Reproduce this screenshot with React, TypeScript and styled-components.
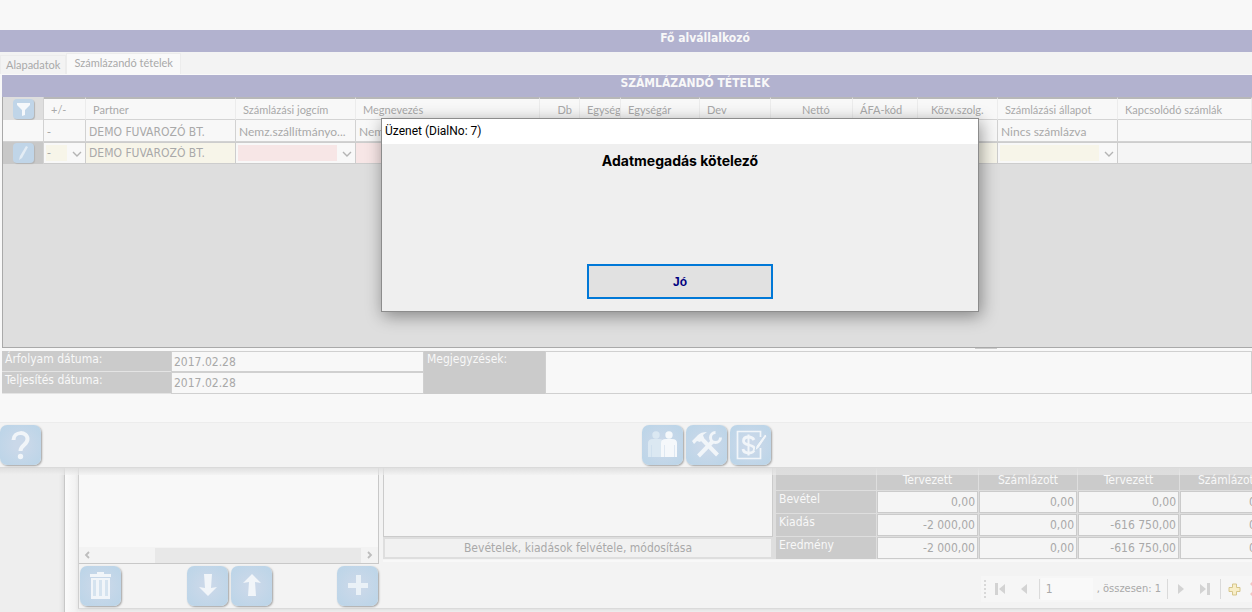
import React from "react";
import styled, { createGlobalStyle, css } from "styled-components";

const Global = createGlobalStyle`
  * { box-sizing: border-box; }
  body {
    margin: 0;
    background: #f8f8f8;
    color: #a9a9a9;
    font: 12px/16px "DejaVu Sans Condensed", "DejaVu Sans", sans-serif;
  }
  button, input, select { font: inherit; color: inherit; margin: 0; padding: 0; border-radius: 0; }
`;

const Page = styled.div`
  position: relative;
  display: flex;
  flex-direction: column;
  min-height: 100vh;
  overflow: hidden;
  padding-top: 30px;
`;

const Banner = styled.h1<{ $shift: number }>`
  margin: 0;
  height: 22px;
  padding-left: ${(p) => p.$shift}px;
  background: #b2b2cf;
  color: #f8f8f8;
  font-size: 12px;
  line-height: 16px;
  font-weight: bold;
  text-align: center;
`;

const Tabs = styled.div`
  display: flex;
  align-items: flex-end;
  height: 23px;
  background: #f3f3f3;
  border-bottom: 1px solid #f9f9f9;
  font: 11px/16px Lato, sans-serif;
`;

const Tab = styled.button<{ $active?: boolean }>`
  height: ${(p) => (p.$active ? 21 : 19)}px;
  padding: 0 ${(p) => (p.$active ? 7 : 5)}px ${(p) => (p.$active ? 2 : 0)}px;
  border: 1px solid #ececec;
  border-bottom: 0;
  background: ${(p) => (p.$active ? "#f9f9f9" : "#f3f3f3")};
  white-space: nowrap;
`;

const GridPanel = styled.section`
  position: relative;
  flex: 1;
  display: flex;
  flex-direction: column;
  margin-left: 2px;
  &::after {
    content: "";
    position: absolute;
    left: 973px;
    top: 100%;
    width: 22px;
    height: 1px;
    background: #cbcbcb;
  }
`;

const GridBody = styled.div`
  flex: 1;
  background: #dedede;
  border-left: 1px solid #a9a9a9;
  border-bottom: 1px solid #a9a9a9;
  overflow: hidden;
`;

const ItemTable = styled.table`
  width: 100%;
  table-layout: fixed;
  border-collapse: separate;
  border-spacing: 0;
`;

const HeadCell = styled.th<{ $right?: boolean }>`
  height: 23px;
  padding: 2px 7px 0;
  border-top: 2px solid #b8b8b8;
  border-right: 1px solid #ececec;
  border-bottom: 1px solid #d4d4d4;
  background: #f8f8f8;
  font: 11px/16px Lato, sans-serif;
  text-align: ${(p) => (p.$right ? "right" : "left")};
  white-space: nowrap;
  overflow: hidden;
`;

const NarrowHead = styled(HeadCell)`
  padding-right: 0;
`;
const NettoHead = styled(HeadCell)`
  padding-left: 31px;
`;
const ServiceHead = styled(HeadCell)`
  padding-left: 13px;
  padding-right: 0;
`;

const Cell = styled.td<{ $list?: boolean }>`
  height: 22px;
  padding: 2px 3px 0;
  border-right: 1px solid #d2d2d2;
  border-bottom: 1px solid #d2d2d2;
  background: #f8f8f8;
  white-space: nowrap;
  overflow: hidden;
  ${(p) => p.$list && css`font-family: Lato, sans-serif;`}
`;

const EditCell = styled(Cell)`
  padding: 0;
  border: 1px solid #cdcdcd;
  border-left-width: 0;
`;

const MarkerCell = styled.td<{ $fill: string }>`
  padding: 0 0 0 10px;
  background: ${(p) => p.$fill};
  border-right: 1px solid #d2d2d2;
`;

const MarkerButton = styled.button`
  display: block;
  width: 21px;
  height: 20px;
  border: 0;
  border-radius: 4px;
  background: #c0d5e8;
  box-shadow: 1px 1px 1px #b4b4b4;
`;

const SelectBox = styled.div`
  position: relative;
  height: 20px;
  svg {
    position: absolute;
    right: 3px;
    top: 8px;
    pointer-events: none;
  }
`;

const Select = styled.select<{ $tint: string }>`
  appearance: none;
  display: block;
  width: 100%;
  height: 20px;
  padding: 0 20px 0 3px;
  border: 0;
  background: linear-gradient(${(p) => p.$tint}, ${(p) => p.$tint}) no-repeat 2px 2px / calc(100% - 20px) 16px #f8f8f8;
`;

const CellInput = styled.input<{ $tint: string }>`
  display: block;
  width: 100%;
  height: 20px;
  padding: 0 3px;
  border: 0;
  background: ${(p) => p.$tint};
`;

const Form = styled.div`
  display: grid;
  grid-template-columns: 169px 253px 121px 1fr;
  grid-template-rows: 21px 22px;
  margin: 3px 0 28px 2px;
`;

const FormLabel = styled.label<{ $tall?: boolean }>`
  padding-left: 3px;
  background: #cbcbcb;
  color: #f8f8f8;
  border-bottom: 1px solid ${(p) => (p.$tall ? "#cbcbcb" : "#e4e4e4")};
  ${(p) => p.$tall && css`grid-area: 1 / 3 / 3 / 4;`}
`;

const FormInput = styled.input<{ $tall?: boolean }>`
  min-width: 0;
  width: 100%;
  height: 100%;
  padding: 0 2px;
  border: 1px solid #d0d0d0;
  background: #f8f8f8;
  ${(p) => p.$tall && css`grid-area: 1 / 4 / 3 / 5;`}
`;

const Toolbar = styled.div`
  position: relative;
  z-index: 1;
  display: flex;
  align-items: flex-start;
  gap: 3px;
  height: 46px;
  padding-top: 2px;
  background: #f3f3f3;
  border-top: 1px solid #ececec;
  border-bottom: 1px solid #dadada;
  &::after {
    content: "";
    position: absolute;
    left: 0;
    right: 0;
    top: 100%;
    margin-top: 1px;
    height: 7px;
    background: linear-gradient(rgba(222, 222, 222, 0.9), rgba(240, 240, 240, 0.5));
  }
`;

const Spacer = styled.span<{ $w: number }>`
  flex: 0 0 ${(p) => p.$w}px;
`;

const IconButton = styled.button`
  flex: none;
  width: 41px;
  height: 40px;
  border: 0;
  border-radius: 7px;
  background: radial-gradient(#cad8e9 20%, #bdd5e8 85%);
  box-shadow: 1px 1px 2px #a0a0a0;
  svg { display: block; width: 100%; height: 100%; }
`;

const Lower = styled.div`
  display: flex;
  height: 144px;
  background: #f3f3f3;
`;

const SideStrip = styled.div`
  flex: 0 0 65px;
  background: #eeeeee;
  border-right: 1px solid #c8c8c8;
  box-shadow: inset -5px 0 4px -4px #d8d8d8;
`;

const Gutter = styled.div`
  flex: 0 0 13px;
  background: linear-gradient(90deg, #fbfbfb, #f0f0f0);
`;

const Work = styled.div`
  flex: 1;
  min-width: 0;
  display: flex;
  margin-bottom: 3px;
  border-left: 1px solid #cfcfcf;
  border-bottom: 1px solid #dadada;
  box-shadow: 0 2px 3px #e2e2e2;
`;

const ListColumn = styled.div`
  flex: 0 0 300px;
`;

const ListBox = styled.div`
  display: flex;
  flex-direction: column;
  justify-content: flex-end;
  height: 96px;
  background: #f8f8f8;
  border-right: 1px solid #c8c8c8;
  border-bottom: 1px solid #c8c8c8;
`;

const ScrollBar = styled.div`
  display: flex;
  align-items: center;
  height: 16px;
  padding: 0 5px;
  background: #f3f3f3;
`;

const ScrollTrack = styled.div`
  flex: 1;
  display: flex;
  justify-content: flex-end;
  padding: 0 5px;
  span { width: 206px; height: 15px; background: #e8e8e8; }
`;

const ListActions = styled.div`
  display: flex;
  gap: 3px;
  padding: 2px 0 0 1px;
`;

const Right = styled.div`
  flex: 1;
  min-width: 0;
  padding-left: 4px;
`;

const Summary = styled.div`
  display: flex;
  align-items: flex-start;
  height: 94px;
  border-bottom: 2px solid #f8f8f8;
  overflow: hidden;
`;

const Middle = styled.div`
  flex: 0 0 393px;
  display: flex;
  flex-direction: column;
  height: 91px;
  border-right: 3px solid #dedede;
`;

const MiddleView = styled.div`
  flex: 1;
  background: #f5f5f5;
  border: 1px solid #cbcbcb;
  border-top: 0;
`;

const EditButton = styled.button`
  height: 22px;
  border: 2px solid #dedede;
  background: #f1f1f1;
  line-height: 16px;
`;

const TotalsTable = styled.table`
  flex: 0 0 501px;
  width: 501px;
  table-layout: fixed;
  border-collapse: separate;
  border-spacing: 0;
  background: #dedede;
`;

const TotalHead = styled.th`
  height: 22px;
  padding: 2px 0 0;
  background: #cbcbcb;
  border-right: 1px solid #dedede;
  color: #f8f8f8;
  font-weight: normal;
  text-align: center;
`;

const TotalLabel = styled.th`
  height: 23px;
  padding: 0 3px 6px;
  background: #cbcbcb;
  border-top: 1px solid #dedede;
  border-right: 1px solid #dedede;
  color: #f8f8f8;
  font-weight: normal;
  line-height: 16px;
  text-align: left;
`;

const TotalCell = styled.td`
  padding: 0;
  border-top: 1px solid #dedede;
  border-right: 1px solid #dedede;
  input {
    display: block;
    width: 100%;
    height: 22px;
    padding: 0 2px;
    border: 1px solid #cbcbcb;
    background: #f5f5f5;
    text-align: right;
  }
`;

const PagerRow = styled.div`
  display: flex;
  justify-content: flex-end;
  padding-top: 14px;
  margin-right: -18px;
`;

const Pager = styled.nav`
  display: flex;
  align-items: center;
  height: 26px;
  background: #f6f6f6;
  overflow: hidden;
  font-size: 11px;
`;

const Grip = styled.span`
  width: 2px;
  height: 18px;
  margin: 0 2px 0 3px;
  border-left: 2px dotted #d8d8d8;
`;

const PagerButton = styled.button`
  width: 24px;
  height: 22px;
  border: 0;
  background: none;
  svg { display: block; margin: auto; }
`;

const Divider = styled.span`
  width: 1px;
  height: 20px;
  margin: 0 1px 0 3px;
  background: #dadada;
`;

const PageInput = styled.input`
  width: 52px;
  height: 22px;
  padding: 0 5px;
  border: 0;
  background: #f9f9f9;
  font-size: 12px;
`;

const PageCount = styled.span`
  padding: 0 3px 0 4px;
`;

const Dialog = styled.div`
  position: absolute;
  z-index: 5;
  left: 381px;
  top: 118px;
  width: 598px;
  height: 194px;
  display: flex;
  flex-direction: column;
  align-items: center;
  border: 1px solid #8c8c8c;
  background: #efefef;
  box-shadow: 2px 4px 16px rgba(0, 0, 0, 0.4);
  color: #000;
`;

const DialogTitle = styled.div`
  align-self: stretch;
  height: 25px;
  padding-left: 3px;
  background: #fff;
  font: 12px/24px Roboto, sans-serif;
`;

const DialogText = styled.p`
  flex: 1;
  margin: 0;
  padding-top: 9px;
  font: bold 14px/16px Inter, sans-serif;
`;

const DialogButton = styled.button`
  width: 186px;
  height: 35px;
  margin-bottom: 12px;
  border: 2px solid #0078d7;
  background: #e1e1e1;
  color: #000080;
  font: bold 12px/16px "Liberation Sans", sans-serif;
`;

const Chevron = () => (
  <svg width="10" height="6" viewBox="0 0 10 6" fill="none" stroke="#b4b4b4" strokeWidth="1.4">
    <path d="M1 1l4 4 4-4" />
  </svg>
);

const ScrollArrow = ({ d }: { d: string }) => (
  <svg width="7" height="8" viewBox="0 0 7 8" fill="none" stroke="#bdbdbd" strokeWidth="1.8">
    <path d={d} />
  </svg>
);

const Person = () => (
  <>
    <circle cx="8" cy="10" r="3.700" />
    <path d="M0 32V18q0-4 5-4h6q5 0 5 4v14h-2.500V20H13v12H3.500V20H3v12z" />
  </>
);

const columns: { label: string; width?: number; right?: boolean }[] = [
  { label: "+/-", width: 42 },
  { label: "Partner", width: 150 },
  { label: "Számlázási jogcím", width: 120 },
  { label: "Megnevezés", width: 184 },
  { label: "Db", width: 40, right: true },
  { label: "Egység", width: 41 },
  { label: "Egységár", width: 79 },
  { label: "Dev", width: 71 },
  { label: "Nettó", width: 82 },
  { label: "ÁFA-kód", width: 65 },
  { label: "Közv.szolg.", width: 80 },
  { label: "Számlázási állapot", width: 120 },
  { label: "Kapcsolódó számlák" },
];

const specialHeads: Record<string, typeof HeadCell> = {
  "Egység": NarrowHead,
  "Nettó": NettoHead,
  "Közv.szolg.": ServiceHead,
};

const firstRow = ["-", "DEMO FUVAROZÓ BT.", "Nemz.szállítmányo...", "Nem", "", "", "", "", "", "", "", "Nincs számlázva", ""];

const totals = [
  { label: "Bevétel", values: ["0,00", "0,00", "0,00", "0,00"] },
  { label: "Kiadás", values: ["-2 000,00", "0,00", "-616 750,00", "0,00"] },
  { label: "Eredmény", values: ["-2 000,00", "0,00", "-616 750,00", "0,00"] },
];

const YELLOW = "#f7f5e9";
const PINK = "#f7e6e6";

export default function App() {
  return (
    <>
      <Global />
      <Page>
        <Banner $shift={158}>Fő alvállalkozó</Banner>
        <Tabs role="tablist">
          <Tab role="tab">Alapadatok</Tab>
          <Tab role="tab" $active aria-selected>Számlázandó tételek</Tab>
        </Tabs>

        <GridPanel>
          <Banner as="h2" $shift={136}>SZÁMLÁZANDÓ TÉTELEK</Banner>
          <GridBody>
            <ItemTable>
              <colgroup>
                <col style={{ width: 41 }} />
                {columns.map((c) => <col key={c.label} style={{ width: c.width }} />)}
              </colgroup>
              <thead>
                <tr>
                  <MarkerCell $fill="#dedede">
                    <MarkerButton aria-label="Szűrés">
                      <svg width="21" height="20" viewBox="0 0 21 20" fill="#f5f8fb">
                        <path d="M4 4h13v2l-5 5v5l-3 1v-6L4 6z" />
                      </svg>
                    </MarkerButton>
                  </MarkerCell>
                  {columns.map((c) => {
                    const Head = specialHeads[c.label] ?? HeadCell;
                    return <Head key={c.label} $right={c.right}>{c.label}</Head>;
                  })}
                </tr>
              </thead>
              <tbody>
                <tr>
                  <Cell />
                  {firstRow.map((text, i) => <Cell key={i} $list={i > 1}>{text}</Cell>)}
                </tr>
                <tr>
                  <MarkerCell $fill="#c8c8c8">
                    <MarkerButton aria-label="Szerkesztés">
                      <svg width="21" height="20" viewBox="0 0 21 20">
                        <path d="M13 3l2 1-6 11-3 2 1-4z" fill="#e3ecf4" />
                      </svg>
                    </MarkerButton>
                  </MarkerCell>
                  <EditCell>
                    <SelectBox>
                      <Select $tint={YELLOW} aria-label="+/-"><option>-</option></Select>
                      <Chevron />
                    </SelectBox>
                  </EditCell>
                  <EditCell><CellInput $tint={YELLOW} aria-label="Partner" defaultValue="DEMO FUVAROZÓ BT." /></EditCell>
                  <EditCell>
                    <SelectBox>
                      <Select $tint={PINK} aria-label="Számlázási jogcím"><option /></Select>
                      <Chevron />
                    </SelectBox>
                  </EditCell>
                  <EditCell><CellInput $tint={PINK} aria-label="Megnevezés" /></EditCell>
                  {columns.slice(4, 11).map((c) => (
                    <EditCell key={c.label}><CellInput $tint={YELLOW} aria-label={c.label} /></EditCell>
                  ))}
                  <EditCell>
                    <SelectBox>
                      <Select $tint={YELLOW} aria-label="Számlázási állapot"><option /></Select>
                      <Chevron />
                    </SelectBox>
                  </EditCell>
                  <EditCell><CellInput $tint="#f5f5f5" aria-label="Kapcsolódó számlák" /></EditCell>
                </tr>
              </tbody>
            </ItemTable>
          </GridBody>
        </GridPanel>

        <Form>
          <FormLabel htmlFor="rate">Árfolyam dátuma:</FormLabel>
          <FormInput id="rate" defaultValue="2017.02.28" />
          <FormLabel htmlFor="done">Teljesítés dátuma:</FormLabel>
          <FormInput id="done" defaultValue="2017.02.28" />
          <FormLabel htmlFor="notes" $tall>Megjegyzések:</FormLabel>
          <FormInput id="notes" $tall />
        </Form>

        <Toolbar>
          <IconButton aria-label="Súgó">
            <svg viewBox="0 0 41 40" fill="none" stroke="#f1f5f9" strokeWidth="4">
              <path d="M13.500 15c0-9 14-9 14-1 0 6-7 6-7 12" />
              <circle cx="20.500" cy="31.500" r="2.700" fill="#f1f5f9" stroke="none" />
            </svg>
          </IconButton>
          <Spacer $w={595} />
          <IconButton aria-label="Partnerek">
            <svg viewBox="0 0 41 40">
              <g transform="translate(6)" fill="#dbe8f2"><Person /></g>
              <g transform="translate(19)" fill="#f5f8fb"><Person /></g>
            </svg>
          </IconButton>
          <IconButton aria-label="Beállítások">
            <svg viewBox="0 0 41 40" fill="none" stroke="#f1f5f9" strokeWidth="4">
              <path d="M12.500 31L27 16" />
              <path d="M29.500 7.500a5 5 0 1 0 5 5" strokeWidth="3" />
              <path d="M15 13l16.500 17" />
              <path d="M6 16l6-6q3-3 9-3l-4 3 1 3-4 4-3-1-3 3z" fill="#f1f5f9" stroke="none" />
            </svg>
          </IconButton>
          <IconButton aria-label="Számla">
            <svg viewBox="0 0 41 40" fill="none" stroke="#f1f5f9" strokeWidth="1.700">
              <path d="M30.500 12V6.500h-23v27h23V23" />
              <path d="M24 15c-1-2-3-3-5.500-3-3 0-5 1.500-5 4 0 5.500 11 2.500 11 8 0 2.500-2.500 4-5.500 4s-5.500-1-6-4" strokeWidth="2.800" />
              <path d="M18.500 9.500v21" strokeWidth="2" />
              <path d="M35 9l2 2-8 12-4 3 1-5z" fill="#f1f5f9" stroke="#c3d6e8" strokeWidth="1" />
            </svg>
          </IconButton>
        </Toolbar>

        <Lower>
          <SideStrip />
          <Gutter />
          <Work>
            <ListColumn>
              <ListBox>
                <ScrollBar>
                  <ScrollArrow d="M5 1L2 4l3 3" />
                  <ScrollTrack><span /></ScrollTrack>
                  <ScrollArrow d="M2 1l3 3-3 3" />
                </ScrollBar>
              </ListBox>
              <ListActions>
                <IconButton aria-label="Törlés">
                  <svg viewBox="0 0 41 40" fill="#f1f5f9">
                    <path d="M17 6h7v2h7v3H10V8h7z" />
                    <path d="M11 12h19v21H11z" />
                    <path d="M14.500 14v16M20.500 14v16M26.500 14v16" stroke="#d5e3ef" strokeWidth="3" />
                  </svg>
                </IconButton>
                <Spacer $w={60} />
                <IconButton aria-label="Le">
                  <svg viewBox="0 0 41 40" fill="#f1f5f9">
                    <path d="M17 8h8l-1 14 6-1-9 9-9-9 6 1z" />
                  </svg>
                </IconButton>
                <IconButton aria-label="Fel">
                  <svg viewBox="0 0 41 40" fill="#f1f5f9">
                    <path d="M17 30h8l-1-14 6 1-9-9-9 9 6-1z" />
                  </svg>
                </IconButton>
                <Spacer $w={59} />
                <IconButton aria-label="Új">
                  <svg viewBox="0 0 41 40" fill="#eaf1f7">
                    <path d="M19 9h5v8h7v5h-7v7h-5v-7h-8v-5h8z" />
                  </svg>
                </IconButton>
              </ListActions>
            </ListColumn>

            <Right>
              <Summary>
                <Middle>
                  <MiddleView />
                  <EditButton>Bevételek, kiadások felvétele, módosítása</EditButton>
                </Middle>
                <TotalsTable>
                  <colgroup>
                    {[101, 102, 99, 102, 97].map((w, i) => <col key={i} style={{ width: w }} />)}
                  </colgroup>
                  <thead>
                    <tr>
                      <TotalHead />
                      <TotalHead>Tervezett</TotalHead>
                      <TotalHead>Számlázott</TotalHead>
                      <TotalHead>Tervezett</TotalHead>
                      <TotalHead>Számlázott</TotalHead>
                    </tr>
                  </thead>
                  <tbody>
                    {totals.map((row) => (
                      <tr key={row.label}>
                        <TotalLabel scope="row">{row.label}</TotalLabel>
                        {row.values.map((v, i) => (
                          <TotalCell key={i}><input aria-label={row.label} defaultValue={v} /></TotalCell>
                        ))}
                      </tr>
                    ))}
                  </tbody>
                </TotalsTable>
              </Summary>
              <PagerRow>
                <Pager aria-label="Lapozó">
                  <Grip />
                  <PagerButton aria-label="Első">
                    <svg width="12" height="12" viewBox="0 0 12 12" fill="#d3d3d3"><path d="M1 0h3v12H1zM11 1v10L5 6z" /></svg>
                  </PagerButton>
                  <PagerButton aria-label="Előző">
                    <svg width="12" height="12" viewBox="0 0 12 12" fill="#d3d3d3"><path d="M9 1v10L3 6z" /></svg>
                  </PagerButton>
                  <Divider />
                  <PageInput aria-label="Oldal" defaultValue="1" />
                  <PageCount>, összesen: 1</PageCount>
                  <Divider />
                  <PagerButton aria-label="Következő">
                    <svg width="12" height="12" viewBox="0 0 12 12" fill="#d3d3d3"><path d="M3 1v10l6-5z" /></svg>
                  </PagerButton>
                  <PagerButton aria-label="Utolsó">
                    <svg width="12" height="12" viewBox="0 0 12 12" fill="#d3d3d3"><path d="M8 0h3v12H8zM1 1v10l6-5z" /></svg>
                  </PagerButton>
                  <Divider />
                  <PagerButton aria-label="Hozzáadás">
                    <svg width="13" height="13" viewBox="0 0 13 13" fill="#f8eec8" stroke="#d6c68c"><path d="M4.500 1h4v3.500H12v4H8.500V12h-4V8.500H1v-4h3.500z" /></svg>
                  </PagerButton>
                  <PagerButton aria-label="Eltávolítás">
                    <svg width="16" height="14" viewBox="0 0 16 14" fill="none" stroke="#f3c4c4" strokeWidth="3"><path d="M1 1l13 12M14 1L1 13" /></svg>
                  </PagerButton>
                </Pager>
              </PagerRow>
            </Right>
          </Work>
        </Lower>

        <Dialog role="dialog" aria-label="Üzenet">
          <DialogTitle>Üzenet (DialNo: 7)</DialogTitle>
          <DialogText>Adatmegadás kötelező</DialogText>
          <DialogButton>Jó</DialogButton>
        </Dialog>
      </Page>
    </>
  );
}
